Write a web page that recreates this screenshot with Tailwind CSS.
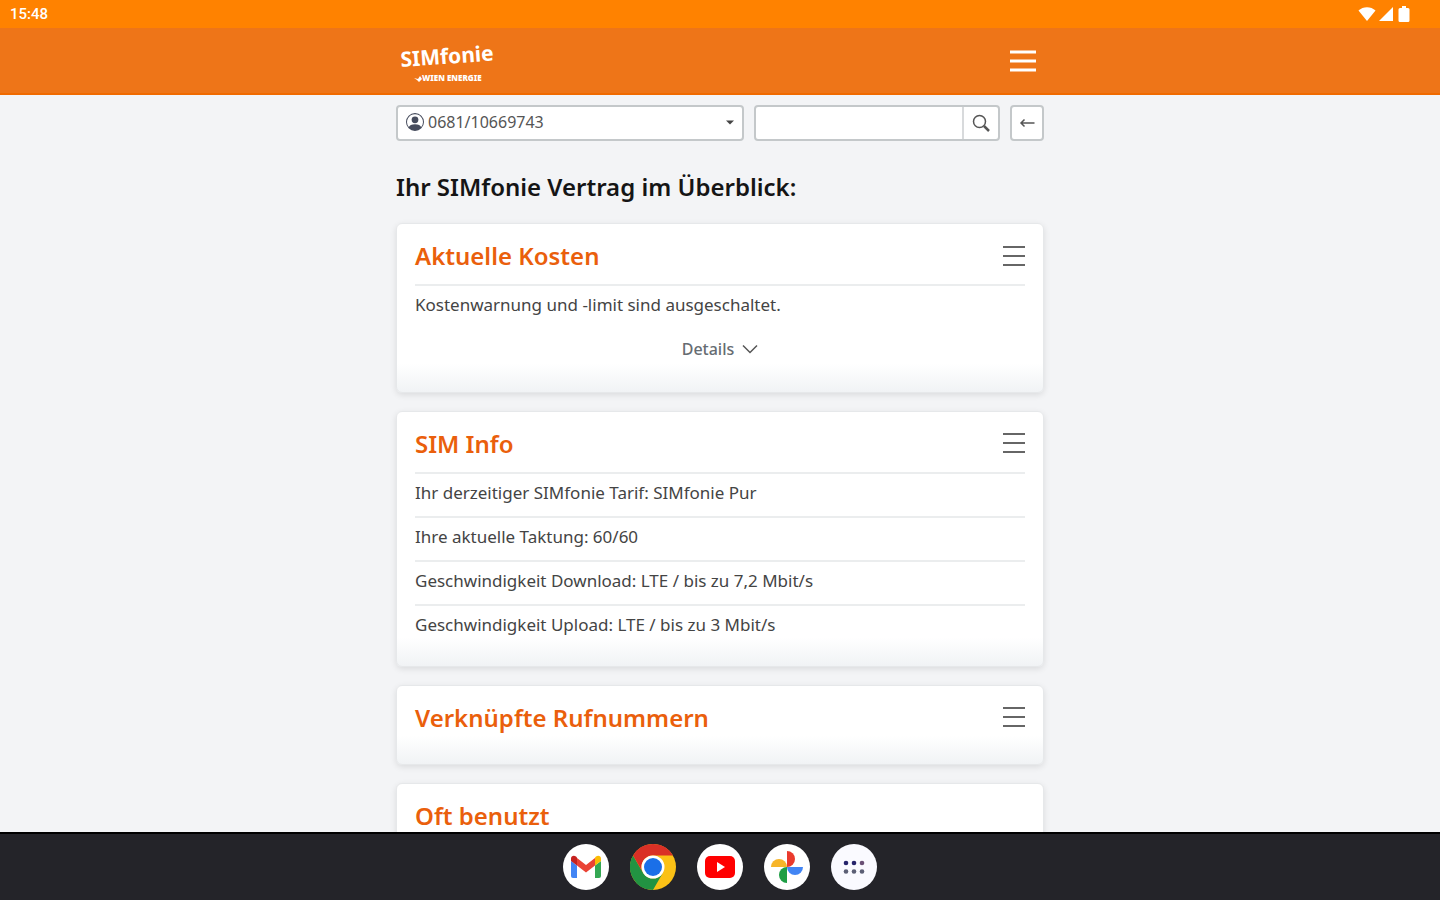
<!DOCTYPE html>
<html lang="de">
<head>
    <meta charset="UTF-8">
    <meta name="viewport" content="width=device-width, initial-scale=1.0">
    <title>SIMfonie</title>
    <script src="https://cdn.jsdelivr.net/npm/@tailwindcss/browser@4"></script>
</head>
<body class="h-screen flex flex-col overflow-hidden bg-[#f3f4f6] text-[#444] font-['Noto_Sans',sans-serif]">

    <!-- Status bar -->
    <div class="h-7 shrink-0 flex items-center justify-between bg-[#ff8200] pl-[10px] pr-7 text-white">
        <span class="text-[15px] font-medium font-['Roboto',sans-serif]">15:48</span>
        <div class="flex items-center gap-[2px]">
            <svg class="w-[18px] h-4" viewBox="0 0 18 16" fill="currentColor"><path d="M9 15 0.500 4.500C5 0 13 0 17.500 4.500z"/></svg>
            <svg class="w-4 h-4" viewBox="0 0 16 16" fill="currentColor"><path d="M15 1v14H1z"/></svg>
            <svg class="w-4 h-4" viewBox="0 0 16 16" fill="currentColor"><path d="M6 0h4v2h2a1.500 1.500 0 0 1 1.500 1.500v11A1.500 1.500 0 0 1 12 16H4a1.500 1.500 0 0 1-1.500-1.500v-11A1.500 1.500 0 0 1 4 2h2z"/></svg>
        </div>
    </div>

    <!-- Header -->
    <header class="h-[67px] shrink-0 bg-[#ee7518] border-b-2 border-[#f06a00]">
        <div class="max-w-[648px] h-full mx-auto flex items-center justify-between pl-1 pr-2">
            <a href="#" aria-label="SIMfonie">
                <svg class="w-28 h-12 overflow-visible" viewBox="0 0 112 48" fill="#fff" font-family="Noto Sans, sans-serif">
                    <text x="1" y="30" font-size="21" font-weight="700" transform="rotate(-4 1 30)">SIMfonie</text>
                    <path d="M14 41l4 1 2-3 2 3-3 3-2-2z"/>
                    <text x="22" y="44" font-size="8" font-weight="900">WIEN ENERGIE</text>
                </svg>
            </a>
            <button type="button" aria-label="Menü">
                <svg class="w-[26px] h-6" viewBox="0 0 26 24" stroke="#fff" stroke-width="3"><path d="M0 3h26M0 12h26M0 21h26"/></svg>
            </button>
        </div>
    </header>

    <main class="flex-1 min-h-0 overflow-hidden">
        <div class="max-w-[648px] mx-auto pt-[10px]">

            <!-- Number select and search -->
            <form class="flex gap-[10px]">
                <div class="flex-1 h-9 flex items-center rounded border-2 border-[#c4c8ca] bg-white px-2 pb-[2px]">
                    <svg class="w-[18px] h-[18px] shrink-0" viewBox="0 0 16 16" fill="#454b5c">
                        <path d="M11 6a3 3 0 1 1-6 0 3 3 0 0 1 6 0z"/>
                        <path fill-rule="evenodd" d="M0 8a8 8 0 1 1 16 0A8 8 0 0 1 0 8zm8-7a7 7 0 0 0-5.468 11.370C3.242 11.226 4.805 10 8 10s4.757 1.225 5.468 2.370A7 7 0 0 0 8 1z"/>
                    </svg>
                    <select aria-label="Rufnummer" class="flex-1 appearance-none bg-transparent pl-1 text-base text-[#555] outline-none">
                        <option>0681/10669743</option>
                    </select>
                    <svg class="w-2 h-[5px]" viewBox="0 0 10 6" fill="#444"><path d="M0 0.500h10L5 5.500z"/></svg>
                </div>
                <div class="w-[246px] h-9 flex rounded border-2 border-[#c4c8ca] bg-white">
                    <input type="text" aria-label="Suche" class="flex-1 min-w-0 px-2 text-base outline-none">
                    <button type="submit" aria-label="Suchen" class="w-9 flex items-center justify-center border-l-2 border-[#d8dadc]">
                        <svg class="w-[18px] h-[18px]" viewBox="0 0 18 18" fill="none" stroke="#555" stroke-width="1.500"><circle cx="7.500" cy="7.500" r="6"/><path d="M12 12l5 5" stroke-width="2.500"/></svg>
                    </button>
                </div>
                <button type="button" aria-label="Zurück" class="w-[34px] h-9 flex items-center justify-center rounded border-2 border-[#c4c8ca] bg-white">
                    <svg class="w-4 h-3" viewBox="0 0 16 12" fill="none" stroke="#555" stroke-width="1.500"><path d="M15.500 6H2M5.500 2.500L2 6l3.500 3.500"/></svg>
                </button>
            </form>

            <h1 class="mt-7 mb-[18px] text-2xl leading-9 font-semibold text-[#151515]">Ihr SIMfonie Vertrag im Überblick:</h1>

            <div class="flex flex-col gap-[18px]">
                <!-- Aktuelle Kosten -->
                <section class="rounded-md border border-[#e6e8ea] bg-linear-to-t from-[#f1f3f5] to-white to-[28px] px-[18px] pb-[22px] shadow-[0_2px_6px_rgba(0,0,0,0.1)]">
                    <div class="h-[60px] pt-1 flex items-center justify-between">
                        <h2 class="text-2xl font-semibold text-[#ea5f0c]">Aktuelle Kosten</h2>
                        <button type="button" aria-label="Menü Aktuelle Kosten">
                            <svg class="w-[22px] h-[22px]" viewBox="0 0 22 22" stroke="#666" stroke-width="2"><path d="M0 2h22M0 11h22M0 20h22"/></svg>
                        </button>
                    </div>
                    <p class="h-11 border-t-2 border-[#ebedee] pt-[7px] text-[17px] leading-6">Kostenwarnung und -limit sind ausgeschaltet.</p>
                    <button type="button" class="w-full h-[42px] flex items-center justify-center gap-2 text-base font-medium text-[#666c72]">
                        Details
                        <svg class="w-4 h-[10px]" viewBox="0 0 16 10" fill="none" stroke="#555" stroke-width="1.500"><path d="M1 1.500l7 7 7-7"/></svg>
                    </button>
                </section>

                <!-- SIM Info -->
                <section class="rounded-md border border-[#e6e8ea] bg-linear-to-t from-[#f1f3f5] to-white to-[28px] px-[18px] pb-[18px] shadow-[0_2px_6px_rgba(0,0,0,0.1)]">
                    <div class="h-[60px] pt-1 flex items-center justify-between">
                        <h2 class="text-2xl font-semibold text-[#ea5f0c]">SIM Info</h2>
                        <button type="button" aria-label="Menü SIM Info">
                            <svg class="w-[22px] h-[22px]" viewBox="0 0 22 22" stroke="#666" stroke-width="2"><path d="M0 1h22M0 10h22M0 19h22"/></svg>
                        </button>
                    </div>
                    <ul class="text-[17px] leading-6">
                        <li class="h-11 border-t-2 border-[#ebedee] pt-[7px]">Ihr derzeitiger SIMfonie Tarif: SIMfonie Pur</li>
                        <li class="h-11 border-t-2 border-[#ebedee] pt-[7px]">Ihre aktuelle Taktung: 60/60</li>
                        <li class="h-11 border-t-2 border-[#ebedee] pt-[7px]">Geschwindigkeit Download: LTE / bis zu 7,2 Mbit/s</li>
                        <li class="h-11 border-t-2 border-[#ebedee] pt-[7px]">Geschwindigkeit Upload: LTE / bis zu 3 Mbit/s</li>
                    </ul>
                </section>

                <!-- Verknüpfte Rufnummern -->
                <section class="rounded-md border border-[#e6e8ea] bg-linear-to-t from-[#f1f3f5] to-white to-[28px] px-[18px] pb-[18px] shadow-[0_2px_6px_rgba(0,0,0,0.1)]">
                    <div class="h-[60px] pt-1 flex items-center justify-between">
                        <h2 class="text-2xl font-semibold text-[#ea5f0c]">Verknüpfte Rufnummern</h2>
                        <button type="button" aria-label="Menü Verknüpfte Rufnummern">
                            <svg class="w-[22px] h-[22px]" viewBox="0 0 22 22" stroke="#666" stroke-width="2"><path d="M0 1h22M0 10h22M0 19h22"/></svg>
                        </button>
                    </div>
                </section>

                <!-- Oft benutzt -->
                <section class="rounded-md border border-[#e6e8ea] bg-white px-[18px] pb-5 shadow-[0_2px_6px_rgba(0,0,0,0.1)]">
                    <div class="h-[60px] pt-1 flex items-center">
                        <h2 class="text-2xl font-semibold text-[#ea5f0c]">Oft benutzt</h2>
                    </div>
                </section>
            </div>
        </div>
    </main>

    <!-- Taskbar -->
    <nav class="h-[68px] shrink-0 flex items-center justify-center gap-[21px] border-t-2 border-black bg-[#242429]">
        <a href="#" aria-label="Gmail" class="rounded-full">
            <svg class="w-[46px] h-[46px]" viewBox="0 0 46 46">
                <circle cx="23" cy="23" r="23" fill="#fff"/>
                <path fill="#4285f4" d="M8 17l6 4.500V34h-4a2 2 0 0 1-2-2z"/>
                <path fill="#34a853" d="M38 17l-6 4.500V34h4a2 2 0 0 0 2-2z"/>
                <path fill="#ea4335" d="M14 14l9 7 9-7v7.500l-9 7-9-7z"/>
                <path fill="#c5221f" d="M8 17v-2.500c0-3 3.200-3.500 5-2l1 1v8z"/>
                <path fill="#fbbc04" d="M38 17v-2.500c0-3-3.200-3.500-5-2l-1 1v8z"/>
            </svg>
        </a>
        <a href="#" aria-label="Chrome" class="rounded-full">
            <svg class="w-[46px] h-[46px]" viewBox="0 0 46 46">
                <circle cx="23" cy="23" r="23" fill="#fbc116"/>
                <path fill="#229342" d="M23 46A23 23 0 0 1 3.080 11.500L13.040 28.750A11.500 11.500 0 0 0 32.960 28.750z"/>
                <path fill="#da3026" d="M3.080 11.500A23 23 0 0 1 42.920 11.500H23A11.500 11.500 0 0 0 13.040 28.750z"/>
                <circle cx="23" cy="23" r="11.500" fill="#fff"/>
                <circle cx="23" cy="23" r="9" fill="#1a6fe8"/>
            </svg>
        </a>
        <a href="#" aria-label="YouTube" class="rounded-full">
            <svg class="w-[46px] h-[46px]" viewBox="0 0 46 46">
                <circle cx="23" cy="23" r="23" fill="#fff"/>
                <rect x="8" y="12" width="30" height="22" rx="5" fill="#f00"/>
                <path fill="#fff" d="M20 18l8 5-8 5z"/>
            </svg>
        </a>
        <a href="#" aria-label="Fotos" class="rounded-full">
            <svg class="w-[46px] h-[46px]" viewBox="0 0 46 46">
                <circle cx="23" cy="23" r="23" fill="#fff"/>
                <path fill="#ea3a2d" d="M23 7a8 8 0 0 1 0 16z"/>
                <path fill="#f7b529" d="M7 23a8 8 0 0 1 16 0z"/>
                <path fill="#4285f4" d="M23 23h16a8 8 0 0 1-16 0z"/>
                <path fill="#1e9e45" d="M23 23v16a8 8 0 0 1 0-16z"/>
            </svg>
        </a>
        <a href="#" aria-label="Alle Apps" class="rounded-full">
            <svg class="w-[46px] h-[46px]" viewBox="0 0 46 46">
                <circle cx="23" cy="23" r="23" fill="#fafaff"/>
                <g fill="#26246b"><circle cx="15" cy="19" r="2.300"/><circle cx="23" cy="19" r="2.300"/></g>
                <circle cx="31" cy="19" r="2.300" fill="#6a5075"/>
                <g fill="#5c5f75"><circle cx="15" cy="27.500" r="2.300"/><circle cx="23" cy="27.500" r="2.300"/><circle cx="31" cy="27.500" r="2.300"/></g>
            </svg>
        </a>
    </nav>

</body>
</html>
